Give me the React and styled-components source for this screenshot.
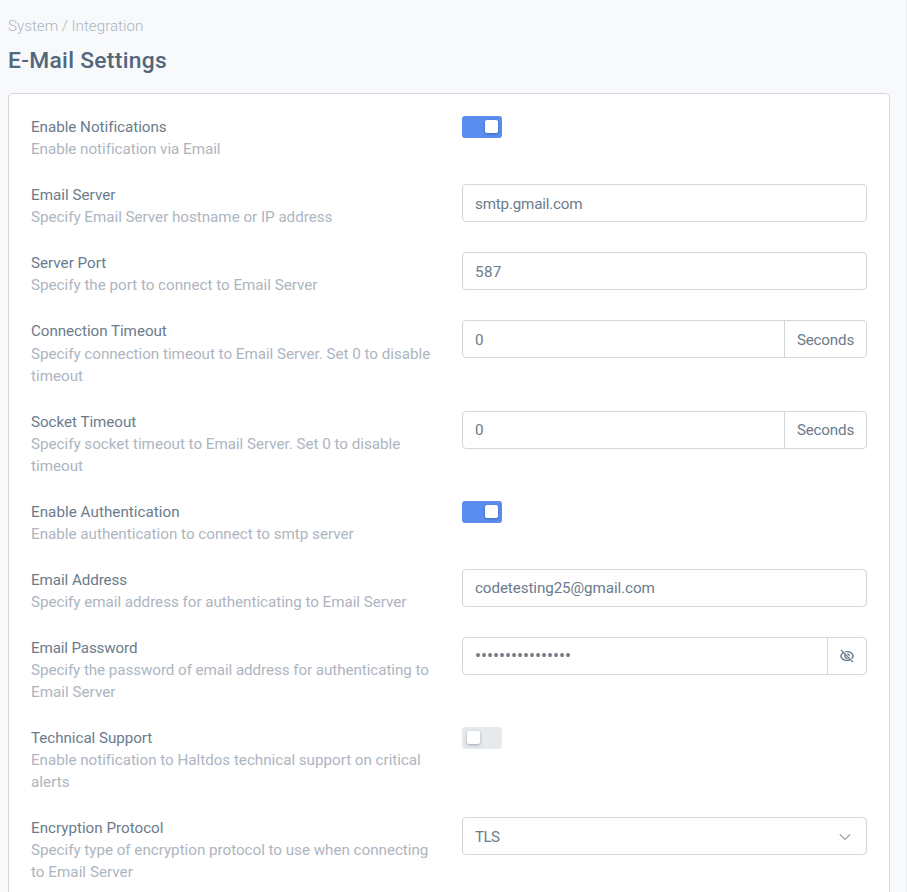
import React from "react";
import styled, { createGlobalStyle } from "styled-components";

const GlobalStyle = createGlobalStyle`
  *, *::before, *::after { box-sizing: border-box; }
  html, body { margin: 0; height: 100%; }
  body {
    overflow: hidden;
    background: #f8f9fb;
    color: #6b7b8c;
    font-family: Roboto, "Liberation Sans", sans-serif;
    font-size: 15.2px;
    line-height: 22.04px;
  }
`;

const Page = styled.div`
  height: 892px;
  overflow: hidden;
  padding: 15px 16px 0 8px;
  border-right: 1px solid #eef0f3;
`;

const Breadcrumb = styled.nav`
  color: #adb5bf;
  font-weight: 300;
  white-space: pre;
`;

const Title = styled.h1`
  margin: 9px 0 0;
  color: #52667c;
  font-size: 22.8px;
  font-weight: 500;
  line-height: 30px;
  letter-spacing: 0.3px;
`;

const Card = styled.main`
  display: flex;
  flex-direction: column;
  gap: 24px;
  width: 882px;
  height: 900px;
  margin-top: 17px;
  padding: 22.16px 22px 22px;
  background: #fff;
  border: 1px solid #d2d6db;
  border-radius: 5px;
`;

const Row = styled.section`
  display: grid;
  grid-template-columns: 405px 405px;
  column-gap: 26px;
  align-items: start;
`;

const Line = styled.div`
  color: ${(p) => (p.$muted ? "#adb5bf" : "#6b7b8c")};
  letter-spacing: ${(p) => p.$track || 0}px;
  white-space: nowrap;
`;

const Control = styled.div`
  display: flex;
  height: 38px;
  margin-bottom: -16px;
  overflow: hidden;
  background: #fff;
  border: 1px solid #d2d6db;
  border-radius: 4px;
`;

const Input = styled.input`
  flex: 1;
  min-width: 0;
  padding: 1px 12px 0;
  border: 0;
  outline: 0;
  background: transparent;
  color: #6b7b8c;
  font: inherit;
  letter-spacing: ${(p) => p.$track || 0}px;

  &[type="password"] {
    font-size: 17.8px;
  }
`;

const Addon = styled.div`
  display: flex;
  align-items: center;
  justify-content: center;
  width: ${(p) => p.$width}px;
  padding-top: ${(p) => (p.$icon ? 0 : 1)}px;
  border-left: 1px solid #d2d6db;
  letter-spacing: -0.2px;
`;

const Select = styled.div`
  display: flex;
  flex: 1;
  align-items: center;
  justify-content: space-between;
  padding: 1px 15px 0 12px;
  letter-spacing: -0.6px;
`;

const Switch = styled.button`
  display: flex;
  align-items: center;
  justify-content: ${(p) => (p.$on ? "flex-end" : "flex-start")};
  width: 40px;
  height: 21.8px;
  padding: 0 4px 0 5px;
  border: 0;
  border-radius: 3px;
  background: ${(p) => (p.$on ? "#5b8def" : "#e7eaed")};
`;

const Knob = styled.span`
  width: 13px;
  height: 13px;
  margin-bottom: 1px;
  background: #fff;
  border-radius: 2px;
  box-shadow: 0 1px 3px rgba(20, 35, 60, 0.35);
`;

const EyeOff = () => (
  <svg width="14" height="14" viewBox="0 0 14 14" fill="none" stroke="#677788" strokeWidth="1.35">
    <path d="M3.6 3.4C2.2 4.2 1.2 5.5.8 7c.8 2.8 3.3 4.4 6.2 4.4 1.2 0 2.3-.3 3.2-.8M5.3 2.8C5.8 2.65 6.4 2.6 7 2.6c2.9 0 5.4 1.6 6.2 4.4-.3 1-.8 1.900-1.600 2.600" />
    <path d="M5.2 5.4c-1.100 1.900.2 4.100 2.300 3.900M7.300 4.800c1.200.1 2 .9 2.100 2.100" />
    <path d="M1 .9l12 12.2" />
  </svg>
);

const Chevron = () => (
  <svg width="12" height="8" viewBox="0 0 12 8" fill="none" stroke="#a0acb8" strokeWidth="1.4">
    <path d="M.8 1.2L6 6.4l5.2-5.2" />
  </svg>
);

const Toggle = ({ on }) => (
  <Switch type="button" role="switch" aria-checked={on} $on={on}>
    <Knob />
  </Switch>
);

const Field = ({ value, track, type = "text", children }) => (
  <Control>
    <Input type={type} value={value} readOnly $track={track} />
    {children}
  </Control>
);

const settings = [
  {
    label: ["Enable Notifications", -0.03],
    help: [["Enable notification via Email", -0.03]],
    control: <Toggle on />,
  },
  {
    label: ["Email Server", 0.02],
    help: [["Specify Email Server hostname or IP address", -0.02]],
    control: <Field value="smtp.gmail.com" track={-0.19} />,
  },
  {
    label: ["Server Port", 0],
    help: [["Specify the port to connect to Email Server", -0.01]],
    control: <Field value="587" track={0.35} />,
  },
  {
    label: ["Connection Timeout", -0.05],
    help: [["Specify connection timeout to Email Server. Set 0 to disable", -0.02], ["timeout", 0]],
    control: <Field value="0"><Addon $width={82}>Seconds</Addon></Field>,
  },
  {
    label: ["Socket Timeout", -0.04],
    help: [["Specify socket timeout to Email Server. Set 0 to disable", -0.02], ["timeout", 0]],
    control: <Field value="0"><Addon $width={82}>Seconds</Addon></Field>,
  },
  {
    label: ["Enable Authentication", 0.04],
    help: [["Enable authentication to connect to smtp server", 0]],
    control: <Toggle on />,
  },
  {
    label: ["Email Address", -0.08],
    help: [["Specify email address for authenticating to Email Server", -0.03]],
    control: <Field value="codetesting25@gmail.com" track={-0.09} />,
  },
  {
    label: ["Email Password", -0.15],
    help: [["Specify the password of email address for authenticating to", -0.07], ["Email Server", 0.02]],
    control: (
      <Field type="password" value="abcdefghijklmnop">
        <Addon $width={39} $icon><EyeOff /></Addon>
      </Field>
    ),
  },
  {
    label: ["Technical Support", -0.05],
    help: [["Enable notification to Haltdos technical support on critical", -0.02], ["alerts", 0.05]],
    control: <Toggle on={false} />,
  },
  {
    label: ["Encryption Protocol", 0],
    help: [["Specify type of encryption protocol to use when connecting", -0.02], ["to Email Server", 0.03]],
    control: <Control><Select>TLS<Chevron /></Select></Control>,
  },
];

export default function App() {
  return (
    <>
      <GlobalStyle />
      <Page>
        <Breadcrumb>System / Integration</Breadcrumb>
        <Title>E-Mail Settings</Title>
        <Card>
          {settings.map(({ label, help, control }) => (
            <Row key={label[0]}>
              <div>
                <Line $track={label[1]}>{label[0]}</Line>
                {help.map(([text, track]) => (
                  <Line key={text} $muted $track={track}>{text}</Line>
                ))}
              </div>
              {control}
            </Row>
          ))}
        </Card>
      </Page>
    </>
  );
}
